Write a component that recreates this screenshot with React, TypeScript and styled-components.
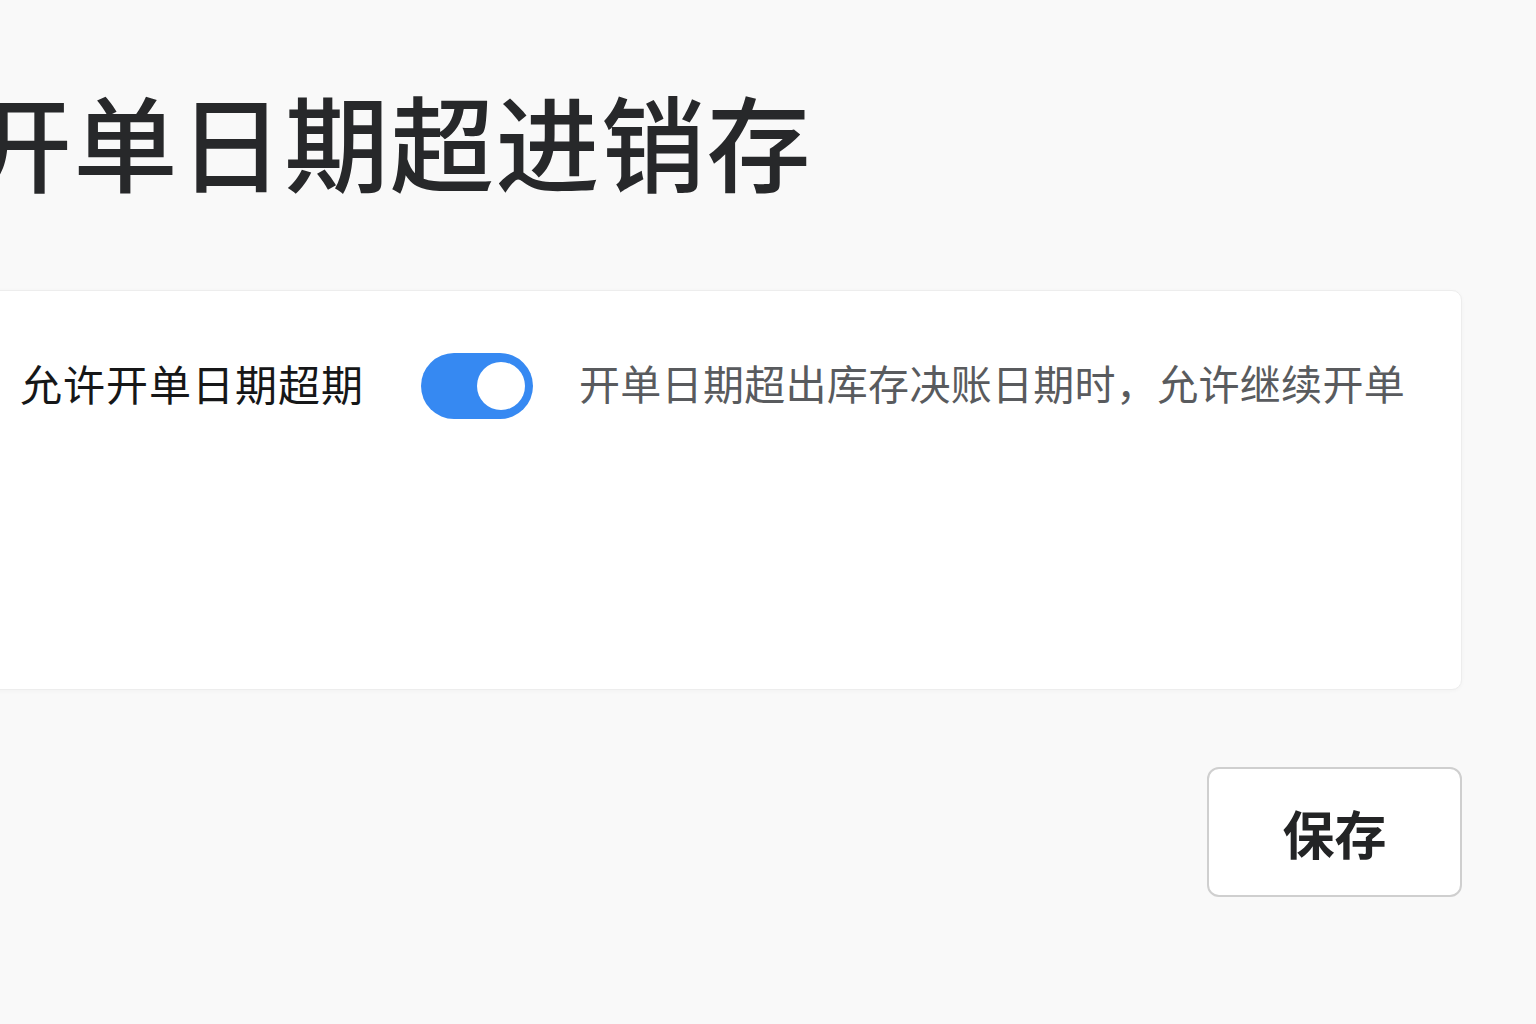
import React, { useState } from 'react'
import styled, { createGlobalStyle } from 'styled-components'

const GlobalStyle = createGlobalStyle`
  html, body {
    margin: 0;
    padding: 0;
    background-color: #f9f9f9;
    overflow: hidden;
  }
  body {
    font-family: "Noto Sans CJK SC", "Noto Sans", sans-serif;
  }
`

const PageWrapper = styled.div`
  display: flex;
  flex-direction: column;
  width: 1502px;
  height: 1024px;
  margin-left: -40px;
  padding-top: 88px;
  box-sizing: border-box;
`

const Title = styled.h1`
  margin: 0 0 98px 8px;
  font-size: 104px;
  line-height: 104px;
  letter-spacing: 1.5px;
  font-weight: 500;
  color: #27282a;
  white-space: nowrap;
`

const Card = styled.div`
  height: 400px;
  box-sizing: border-box;
  padding: 62px 0 0 59px;
  background-color: #ffffff;
  border: 1px solid #ededed;
  border-radius: 10px;
  box-shadow: 0 1px 4px rgba(0, 0, 0, 0.03);
`

const SettingRow = styled.div`
  display: flex;
  align-items: center;
  height: 66px;
`

const Label = styled.span`
  font-size: 42px;
  letter-spacing: 1px;
  font-weight: 400;
  color: #161718;
  white-space: nowrap;
  margin-right: 57px;
  padding-bottom: 8px;
`

const SwitchTrack = styled.button<{ $on: boolean }>`
  position: relative;
  flex-shrink: 0;
  width: 112px;
  height: 66px;
  padding: 0;
  border: none;
  border-radius: 33px;
  background-color: ${(p) => (p.$on ? '#3689f2' : '#d0d3d8')};
  cursor: pointer;
  margin-right: 46px;
`

const SwitchKnob = styled.span<{ $on: boolean }>`
  position: absolute;
  top: 9px;
  left: ${(p) => (p.$on ? '56px' : '8px')};
  width: 48px;
  height: 48px;
  border-radius: 50%;
  background-color: #ffffff;
  transition: left 0.2s ease;
`

const Description = styled.span`
  font-size: 41px;
  letter-spacing: 0.3px;
  font-weight: 400;
  color: #595b5e;
  white-space: nowrap;
  padding-bottom: 8px;
`

const SaveButton = styled.button`
  align-self: flex-end;
  margin-top: 77px;
  width: 255px;
  height: 130px;
  border: 2px solid #cfcfcf;
  border-radius: 12px;
  background-color: #ffffff;
  font-family: "Noto Sans CJK SC", "Noto Sans", sans-serif;
  font-size: 52px;
  font-weight: 600;
  color: #232425;
  cursor: pointer;
`

export default function App() {
  const [allowOverdue, setAllowOverdue] = useState(true)

  return (
    <>
      <GlobalStyle />
      <PageWrapper>
        <Title>开单日期超进销存</Title>
        <Card>
          <SettingRow>
            <Label>允许开单日期超期</Label>
            <SwitchTrack
              $on={allowOverdue}
              onClick={() => setAllowOverdue(!allowOverdue)}
            >
              <SwitchKnob $on={allowOverdue} />
            </SwitchTrack>
            <Description>开单日期超出库存决账日期时，允许继续开单</Description>
          </SettingRow>
        </Card>
        <SaveButton>保存</SaveButton>
      </PageWrapper>
    </>
  )
}
